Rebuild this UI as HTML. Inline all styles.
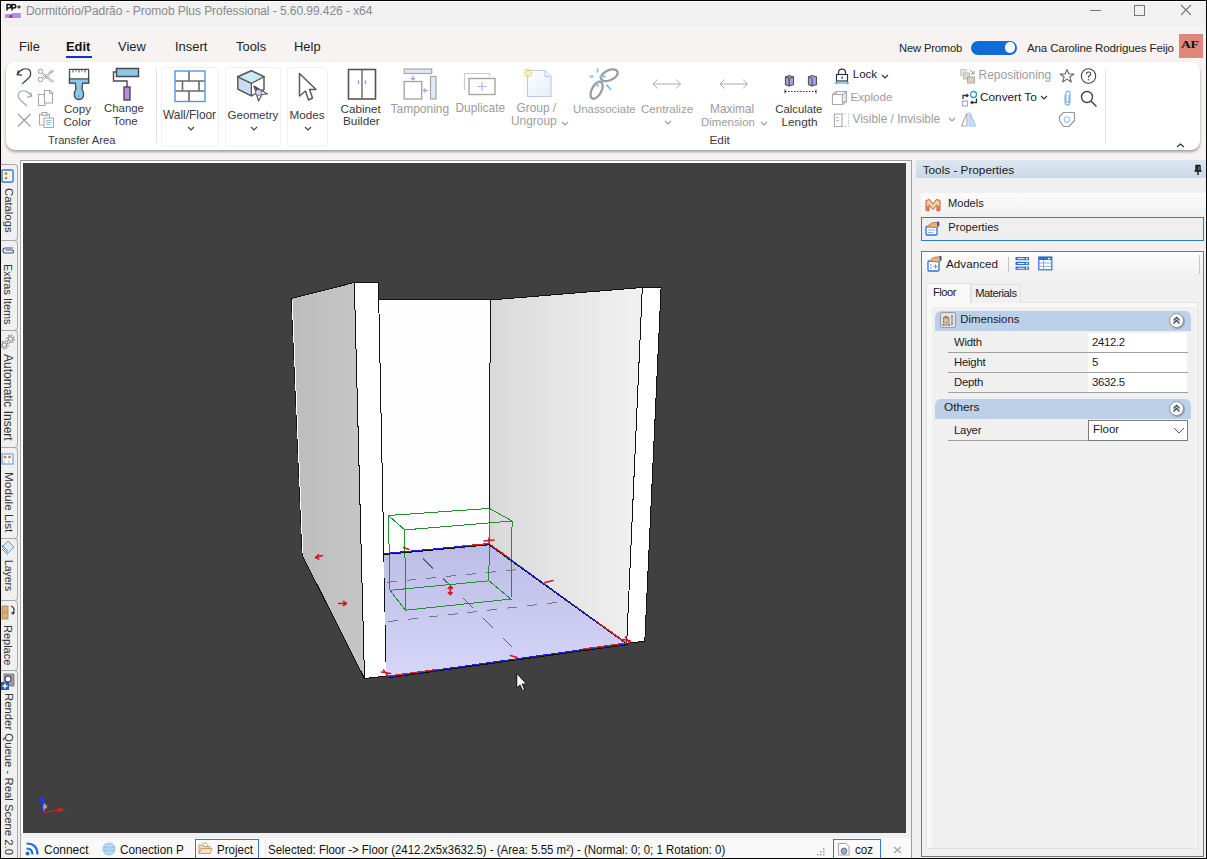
<!DOCTYPE html>
<html><head><meta charset="utf-8">
<style>
*{margin:0;padding:0;box-sizing:border-box}
html,body{width:1207px;height:859px;overflow:hidden;background:#000}
body{font-family:"Liberation Sans",sans-serif;color:#1a1a1a}
#root{position:absolute;left:0;top:0;width:1207px;height:859px;overflow:hidden;background:#f7f3f3}
.a{position:absolute}
.t{position:absolute;white-space:nowrap;line-height:1}
svg{position:absolute;overflow:visible}
</style></head><body><div id="root">
<!-- title bar -->
<div class="a" style="left:1px;top:1px;width:1205px;height:25px;background:#f1f1f1;border-top:1px solid #fff;border-left:1px solid #fff"></div>

<!-- app icon -->
<div class="a" style="left:5px;top:3px;width:17px;height:16px;background:#fff"></div>
<svg style="left:5px;top:3px" width="17" height="16"><path d="M2 7.5V1.5H4Q5.8 1.5 5.8 3.3Q5.8 5 4 5H2M7 7.5V1.5H9Q10.8 1.5 10.8 3.3Q10.8 5 9 5H7" stroke="#111" stroke-width="1.5" fill="none"/><path d="M12 4H16M14 2.3V5.7" stroke="#222" stroke-width="1.2"/><path d="M0 11H7V10H16V15H0Z" fill="#b98de6"/><path d="M4.5 14.5L6.5 12" stroke="#c00" stroke-width="1.4"/><rect x="5.5" y="12" width="2" height="3" fill="#667"/></svg>
<div class="t" style="left:26px;top:5px;font-size:12px;color:#8a8a8a;letter-spacing:-0.06px">Dormitório/Padrão - Promob Plus Professional - 5.60.99.426 - x64</div>
<!-- window controls -->
<div class="a" style="left:1090px;top:10px;width:11px;height:1px;background:#777"></div>
<div class="a" style="left:1134px;top:5px;width:11px;height:11px;border:1px solid #777"></div>
<svg style="left:1180px;top:4px" width="13" height="13"><path d="M1 1L11 11M11 1L1 11" stroke="#777" stroke-width="1.1"/></svg>
<!-- menu -->
<div class="t" style="left:19px;top:39.6px;font-size:13.6px;color:#222;transform:scaleX(0.95);transform-origin:0 0">File</div>
<div class="t" style="left:66px;top:39.6px;font-size:13.6px;font-weight:bold;color:#111;transform:scaleX(0.95);transform-origin:0 0">Edit</div>
<div class="a" style="left:66px;top:56px;width:26px;height:2px;background:#1b2ad8"></div>
<div class="t" style="left:118px;top:39.6px;font-size:13.6px;color:#222;transform:scaleX(0.95);transform-origin:0 0">View</div>
<div class="t" style="left:174.5px;top:39.6px;font-size:13.6px;color:#222;transform:scaleX(0.95);transform-origin:0 0">Insert</div>
<div class="t" style="left:236px;top:39.6px;font-size:13.6px;color:#222;transform:scaleX(0.95);transform-origin:0 0">Tools</div>
<div class="t" style="left:294px;top:39.6px;font-size:13.6px;color:#222;transform:scaleX(0.95);transform-origin:0 0">Help</div>
<div class="t" style="left:899px;top:43px;font-size:11.2px;color:#222;letter-spacing:-0.15px">New Promob</div>
<div class="a" style="left:970.5px;top:40.5px;width:46px;height:14px;border-radius:7px;background:#0f6cd6"></div>
<div class="a" style="left:1004.5px;top:42.3px;width:10.5px;height:10.5px;border-radius:6px;background:#fff"></div>
<div class="t" style="left:1027px;top:43px;font-size:11.5px;color:#222;letter-spacing:-0.12px">Ana Caroline Rodrigues Feijo</div>
<div class="a" style="left:1179px;top:34px;width:24px;height:24px;background:#e0877c"></div>
<div class="t" style="left:1181.3px;top:40.3px;font-size:10.5px;font-family:'Liberation Serif',serif;font-weight:bold;color:#111;transform:scaleX(1.3);transform-origin:0 0;letter-spacing:-0.3px">AF</div>
<!-- ribbon -->
<div class="a" style="left:6px;top:62px;width:1194px;height:88px;background:#fff;border-radius:9px;box-shadow:0 2px 3px rgba(0,0,0,0.35)"></div>

<!-- ===== LEFT TAB STRIP ===== -->
<div class="a" style="left:1px;top:160px;width:19px;height:698px;background:#f0f0f0"></div>

<div class="a" style="left:20px;top:160px;width:1px;height:698px;background:#a8a8a8"></div>
<!-- ===== VIEWPORT FRAME ===== -->
<div class="a" style="left:21px;top:160px;width:890px;height:678px;background:#f0f0f0"></div>
<div class="a" style="left:20px;top:160px;width:892px;height:1px;background:#a0a0a0"></div>
<div class="a" style="left:911px;top:160px;width:1px;height:698px;background:#a0a0a0"></div>
<div class="a" style="left:21px;top:161px;width:2px;height:672px;background:#fff"></div>
<div class="a" style="left:21px;top:161px;width:885px;height:2px;background:#fff"></div>
<div id="vp" class="a" style="left:23px;top:163px;width:883px;height:670px;background:#404040"></div>
<!-- ===== STATUS BAR ===== -->
<div class="a" style="left:21px;top:838px;width:889px;height:20px;background:#f9f9f9"></div>
<!-- ===== RIGHT PANEL ===== -->
<div class="a" style="left:912px;top:160px;width:294px;height:698px;background:#f0f0f0"></div>
<div class="a" style="left:916px;top:160px;width:290px;height:18px;background:linear-gradient(#dde7f1,#c9d7e5)"></div>
<div class="t" style="left:922.7px;top:163.8px;font-size:11.75px;color:#1a1a1a">Tools - Properties</div>
<svg style="left:1193px;top:164px" width="10" height="12"><path d="M2.5 1.5H7.5M3 1.5V7M7 1.5V7M1.5 7H8.5M5 7V11" stroke="#111" stroke-width="1.4" fill="none"/><rect x="3.5" y="1.5" width="2" height="5" fill="#111"/></svg>
<div class="a" style="left:921px;top:193px;width:285px;height:22px;background:linear-gradient(#fbfbfb,#f2f2f2)"></div>
<div class="t" style="left:948px;top:198.3px;font-size:11.1px;color:#1a1a1a">Models</div>
<div class="a" style="left:921px;top:217px;width:283px;height:24px;border:1px solid #2a7ad6;background:#efefef"></div>
<div class="t" style="left:948.3px;top:221.8px;font-size:11.1px;color:#1a1a1a">Properties</div>
<!-- Advanced frame -->
<div class="a" style="left:921px;top:251px;width:283px;height:606px;border:1px solid #777;background:#f0f0f0"></div>
<div class="a" style="left:922px;top:252px;width:281px;height:24px;background:linear-gradient(#fdfdfd,#f0f0f0)"></div>
<div class="a" style="left:1199px;top:255px;width:1px;height:19px;background:#c8c8c8"></div>
<div class="t" style="left:946px;top:257.5px;font-size:11.7px;color:#1a1a1a">Advanced</div>
<div class="a" style="left:1008px;top:257px;width:1px;height:15px;background:#c4c4c4"></div>
<!-- tabs -->
<div class="a" style="left:926px;top:302px;width:272px;height:547px;background:#f8f8f8;border:1px solid #e2e2e2"></div>
<div class="a" style="left:971px;top:284px;width:50px;height:19px;background:#f0f0f0;border:1px solid #e0e0e0;border-bottom:none"></div>
<div class="a" style="left:926px;top:283px;width:45px;height:21px;background:#f8f8f8;border:1px solid #e2e2e2;border-bottom:none"></div>
<div class="t" style="left:933px;top:286.5px;font-size:11.2px;color:#1a1a1a;letter-spacing:-0.5px">Floor</div>
<div class="t" style="left:975.2px;top:288px;font-size:11.2px;color:#1a1a1a;letter-spacing:-0.45px">Materials</div>
<div class="a" style="left:932px;top:307px;width:264px;height:541px;background:#f0f0f0"></div>

<!-- property grid -->
<div class="a" style="left:935px;top:311px;width:256px;height:20px;background:#bcd1e9;border-radius:6px 6px 0 0"></div>
<div class="a" style="left:940px;top:312px;width:16px;height:16px;background:#e4e4e4;border:1px solid #9a9a9a;border-radius:2px"></div>
<svg style="left:941px;top:313px" width="14" height="14"><path d="M2 5Q5 1.5 8 5" fill="#c78a5a" stroke="#8a6a50" stroke-width="0.8"/><rect x="2.5" y="5" width="5.5" height="5" fill="#d8c0a8" stroke="#8a7a6a" stroke-width="0.8"/><path d="M1.5 12H9M2 11V13M8.5 11V13M11 3V11M10 3H12M10 11H12" stroke="#666" stroke-width="0.9" fill="none"/></svg>
<div class="t" style="left:960.3px;top:313.8px;font-size:11.3px;color:#1a1a1a">Dimensions</div>
<div class="a" style="left:1169px;top:313px;width:15px;height:15px;border-radius:8px;background:#fff;border:1px solid #8e8e8e;box-shadow:1px 1px 1px rgba(0,0,0,0.25)"></div>
<svg style="left:1170px;top:314px" width="13" height="13"><path d="M3.5 6.5L6.5 3.5L9.5 6.5M3.5 9.5L6.5 6.5L9.5 9.5" stroke="#2b3f66" stroke-width="1.3" fill="none"/></svg>
<!-- rows -->
<div class="a" style="left:1088px;top:333px;width:99px;height:19px;background:#fff"></div>
<div class="a" style="left:1088px;top:353px;width:99px;height:19px;background:#fff"></div>
<div class="a" style="left:1088px;top:373px;width:99px;height:19px;background:#fff"></div>
<div class="a" style="left:948px;top:352px;width:240px;height:1px;background:#a0a0a0"></div>
<div class="a" style="left:948px;top:372px;width:240px;height:1px;background:#a0a0a0"></div>
<div class="a" style="left:948px;top:392px;width:240px;height:1px;background:#a0a0a0"></div>
<div class="t" style="left:954px;top:336.5px;font-size:11.3px;color:#1a1a1a;letter-spacing:-0.2px">Width</div>
<div class="t" style="left:954px;top:356.5px;font-size:11.3px;color:#1a1a1a;letter-spacing:-0.2px">Height</div>
<div class="t" style="left:954px;top:376.5px;font-size:11.3px;color:#1a1a1a;letter-spacing:-0.2px">Depth</div>
<div class="t" style="left:1092px;top:336.5px;font-size:11.3px;color:#1a1a1a;letter-spacing:-0.3px">2412.2</div>
<div class="t" style="left:1092px;top:356.5px;font-size:11.3px;color:#1a1a1a">5</div>
<div class="t" style="left:1092px;top:376.5px;font-size:11.3px;color:#1a1a1a;letter-spacing:-0.3px">3632.5</div>
<div class="a" style="left:935px;top:399px;width:256px;height:20px;background:#bcd1e9;border-radius:6px 6px 0 0"></div>
<div class="t" style="left:944px;top:402px;font-size:11.8px;color:#1a1a1a">Others</div>
<div class="a" style="left:1169px;top:401px;width:15px;height:15px;border-radius:8px;background:#fff;border:1px solid #8e8e8e;box-shadow:1px 1px 1px rgba(0,0,0,0.25)"></div>
<svg style="left:1170px;top:402px" width="13" height="13"><path d="M3.5 6.5L6.5 3.5L9.5 6.5M3.5 9.5L6.5 6.5L9.5 9.5" stroke="#2b3f66" stroke-width="1.3" fill="none"/></svg>
<div class="a" style="left:1088px;top:420px;width:100px;height:21px;background:#fff;border:1px solid #7a7a7a"></div>
<div class="a" style="left:948px;top:440px;width:140px;height:1px;background:#a0a0a0"></div>
<div class="t" style="left:954px;top:424.5px;font-size:11.3px;color:#1a1a1a;letter-spacing:-0.2px">Layer</div>
<div class="t" style="left:1093px;top:423.5px;font-size:11.5px;color:#1a1a1a">Floor</div>
<svg style="left:1173px;top:427px" width="12" height="7"><path d="M1 1L6 6L11 1" stroke="#555" stroke-width="1" fill="none"/></svg>

<!-- ===== RIBBON CONTENT ===== -->
<!-- transfer area small icons -->
<svg style="left:16px;top:68px" width="17" height="17"><path d="M1.8 6.2C4 1.5 9 -0.2 12.5 1.3C15.5 3 15.3 7.3 13 9.7L6.8 15.3" stroke="#3c3c3c" stroke-width="1.2" fill="none"/><path d="M6.8 15.3L5.8 16.2" stroke="#3b8fe0" stroke-width="1.5"/><path d="M6 7.2L1.2 6.6L2.4 2.4" stroke="#3c3c3c" stroke-width="1.3" fill="none"/></svg>
<svg style="left:37px;top:68px" width="17" height="16"><circle cx="3.5" cy="3.5" r="2.2" stroke="#9a9a9a" stroke-width="1" fill="none"/><circle cx="3.5" cy="11.5" r="2.2" stroke="#9a9a9a" stroke-width="1" fill="none"/><path d="M5.5 10L15.5 2.2L16.5 3.3L7 11.3M5.5 5L16.5 13.2L15.5 14.2L5.3 6.8" stroke="#a0a0a0" stroke-width="0.9" fill="none"/><path d="M12 5L15.5 2.6M8.5 8.8L9.5 9.6" stroke="#7fb4e6" stroke-width="1.1"/></svg>
<svg style="left:16px;top:89px" width="17" height="18"><path d="M15.2 7.2C13 2.5 8 0.8 4.5 2.3C1.5 4 1.7 8.3 4 10.7L10.2 16.3" stroke="#a8a8a8" stroke-width="1.2" fill="none"/><path d="M10.2 16.3L11.2 17.2" stroke="#8fc0ec" stroke-width="1.5"/><path d="M11 8.2L15.8 7.6L14.6 3.4" stroke="#a8a8a8" stroke-width="1.2" fill="none"/></svg>
<svg style="left:37px;top:89px" width="17" height="18"><path d="M1.5 5.5H6.5L8 7V16.5H1.5Z" stroke="#a8a8a8" stroke-width="1.1" fill="#fff"/><path d="M7.5 1.5H13L15.5 4V14H7.5Z" stroke="#a8a8a8" stroke-width="1.1" fill="#fff"/><path d="M12.5 2V4.5H15" stroke="#b6a6d8" stroke-width="1" fill="none"/></svg>
<svg style="left:16px;top:112px" width="16" height="16"><path d="M2 2L14.5 14.5M14.5 2L2 14.5" stroke="#9c9c9c" stroke-width="1.1"/></svg>
<svg style="left:38px;top:111px" width="17" height="18"><path d="M1.5 3.5H11.5V14H1.5Z" stroke="#a8a8a8" stroke-width="1.1" fill="#fff"/><rect x="4" y="1.5" width="5" height="3" stroke="#a8a8a8" stroke-width="1" fill="#eee"/><path d="M6 7H15.5V16.5H6Z" stroke="#a8a8a8" stroke-width="1.1" fill="#fff"/><path d="M8 9.5H13.5M8 11.5H13.5M8 13.5H12" stroke="#8fc0ec" stroke-width="1"/></svg>
<!-- copy color brush -->
<svg style="left:68px;top:68px" width="22" height="33"><path d="M1.5 1.3H20.6V15.2H1.5Z" stroke="#4a4a4a" stroke-width="1.3" fill="#fff"/><path d="M5 1.3V4.5M8 1.3V3.5M11 1.3V4.5M14 1.3V3.5M17 1.3V4.5" stroke="#4a4a4a" stroke-width="1"/><path d="M1.5 10.9H20.6V15.2H14.6L14 21.2Q15.6 24 15.6 26Q15.6 31.5 11 31.5Q6.3 31.5 6.3 26Q6.3 24 8 21.2L7.3 15.2H1.5Z" stroke="#4a4a4a" stroke-width="1.3" fill="#8ec5ec"/><path d="M10.2 28H11.8" stroke="#8a6aa0" stroke-width="0.9"/></svg>
<div class="t" style="left:64px;top:103px;font-size:11.6px;color:#3a3a3a;letter-spacing:0">Copy</div>
<div class="t" style="left:63.5px;top:115.5px;font-size:11.6px;color:#3a3a3a">Color</div>
<svg style="left:112px;top:67px" width="28" height="34"><rect x="4.5" y="1.5" width="22" height="8" stroke="#4a4a4a" stroke-width="1.5" fill="#8ec5ec"/><path d="M4.5 5H1.5V14H15V20" stroke="#4a4a4a" stroke-width="1.4" fill="none"/><rect x="12" y="20" width="6" height="13" stroke="#4a4a4a" stroke-width="1.4" fill="#b98ce0"/></svg>
<div class="t" style="left:104px;top:103px;font-size:11.4px;color:#3a3a3a">Change</div>
<div class="t" style="left:113px;top:115.5px;font-size:11.4px;color:#3a3a3a">Tone</div>
<div class="t" style="left:48px;top:134.5px;font-size:11.2px;color:#3a3a3a">Transfer Area</div>
<div class="a" style="left:156px;top:69px;width:1px;height:74px;background:#e2e2e2"></div>
<!-- wall/floor -->
<div class="a" style="left:161px;top:67px;width:58px;height:80px;border:1px solid #f1f1f1;border-radius:3px"></div>
<svg style="left:174px;top:70px" width="32" height="32"><rect x="1" y="1" width="30" height="30.5" stroke="#4f98e4" stroke-width="1.4" fill="#fff"/><path d="M1.5 11H30.5M1.5 21H30.5M15 1.5V11M8.5 11V21M25 11V21M15 21V31" stroke="#6a6a6a" stroke-width="1.6"/></svg>
<div class="t" style="left:163px;top:110px;font-size:11.9px;color:#3a3a3a">Wall/Floor</div>
<svg style="left:187px;top:126px" width="8" height="5"><path d="M1 1L4 4L7 1" stroke="#444" stroke-width="1.2" fill="none"/></svg>
<!-- geometry -->
<div class="a" style="left:225px;top:67px;width:56px;height:80px;border:1px solid #f1f1f1;border-radius:3px"></div>
<svg style="left:236px;top:70px" width="34" height="32"><path d="M15.4 0.8L28 6.8V19.5L15.4 25.8L1.9 19L1.9 6.8Z" stroke="#5a5a5a" stroke-width="1.5" fill="#fff" stroke-linejoin="round"/><path d="M1.9 6.8L15.4 13.3V25.8L1.9 19Z" fill="#c9dbf5" stroke="#5a5a5a" stroke-width="1.3"/><path d="M1.9 6.8L15.4 13.3L28 6.8L15.4 0.8Z" stroke="#5a5a5a" stroke-width="1.3" fill="#cdebf4"/><path d="M18 16L31.5 24L26 24.5L22.5 31Z" stroke="#555" stroke-width="1.2" fill="#fff" stroke-linejoin="round"/><path d="M18 16L21 22L23.5 19.5Z" fill="#444"/><circle cx="22.5" cy="22.5" r="3" fill="#c9dbf5" stroke="#666" stroke-width="0.9"/></svg>
<div class="t" style="left:227.5px;top:109px;font-size:11.6px;color:#3a3a3a">Geometry</div>
<svg style="left:250px;top:126px" width="8" height="5"><path d="M1 1L4 4L7 1" stroke="#444" stroke-width="1.2" fill="none"/></svg>
<!-- modes -->
<div class="a" style="left:287px;top:67px;width:41px;height:80px;border:1px solid #f1f1f1;border-radius:3px"></div>
<svg style="left:298px;top:72px" width="20" height="30"><path d="M1.5 1.5L18 17.5H11.5L14.5 26L10.5 28L7.5 19L1.5 24Z" stroke="#5a5a5a" stroke-width="1.5" fill="#fff" stroke-linejoin="round"/></svg>
<div class="t" style="left:289.5px;top:109px;font-size:11.7px;color:#3a3a3a">Modes</div>
<svg style="left:304px;top:126px" width="8" height="5"><path d="M1 1L4 4L7 1" stroke="#444" stroke-width="1.2" fill="none"/></svg>
<!-- cabinet builder -->
<svg style="left:347px;top:68px" width="30" height="32"><rect x="1.5" y="1.5" width="27" height="29.5" stroke="#555" stroke-width="1.6" fill="#fff"/><path d="M15 1.5V31" stroke="#666" stroke-width="1.4"/><path d="M11.5 12.5V16M18.5 12.5V16" stroke="#9b8ff0" stroke-width="1.4"/></svg>
<div class="t" style="left:340.5px;top:103px;font-size:11.7px;color:#3a3a3a">Cabinet</div>
<div class="t" style="left:343px;top:116px;font-size:11.8px;color:#3a3a3a">Builder</div>

<!-- tamponing -->
<svg style="left:403px;top:68px" width="35" height="33"><rect x="1.2" y="1" width="27.5" height="4.5" stroke="#a6a6a6" stroke-width="1.2" fill="#dfe9f7"/><rect x="1.2" y="13.5" width="17.5" height="17.5" stroke="#a6a6a6" stroke-width="1.4" fill="#fff"/><rect x="27.5" y="8.5" width="5.5" height="22.5" stroke="#a6a6a6" stroke-width="1.2" fill="#dfe9f7"/><path d="M10 7.5V12M8 10L10 12L12 10" stroke="#a99be6" stroke-width="1.1" fill="none"/><path d="M20.5 22.5H25.5M22.5 20.5L20.5 22.5L22.5 24.5" stroke="#a99be6" stroke-width="1.1" fill="none"/></svg>
<div class="t" style="left:390.5px;top:103px;font-size:12px;color:#9c9c9c">Tamponing</div>
<!-- duplicate -->
<svg style="left:463px;top:72px" width="35" height="24"><path d="M1.5 18V1.5H26.5V4.5" stroke="#cdc8ee" stroke-width="1.2" fill="none"/><rect x="6" y="6.5" width="26" height="16" stroke="#a6a6a6" stroke-width="1.4" fill="#fff"/><path d="M19 10V19M14.5 14.5H23.5" stroke="#b4a8ea" stroke-width="1.1"/></svg>
<div class="t" style="left:455.5px;top:103px;font-size:11.9px;color:#9c9c9c">Duplicate</div>
<!-- group -->
<svg style="left:522px;top:67px" width="31" height="31"><path d="M5.5 3.5H23L29 9.5V29.5H5.5Z" stroke="#b7cbe6" stroke-width="1.1" fill="url(#gpg)"/><path d="M23 3.5V9.5H29" stroke="#b7cbe6" stroke-width="1" fill="#eef4fb"/><defs><linearGradient id="gpg" x1="0" y1="0" x2="1" y2="1"><stop offset="0" stop-color="#fff"/><stop offset="1" stop-color="#e4eefa"/></linearGradient></defs><path d="M6 1V11M1 6H11M2.5 2.5L9.5 9.5M9.5 2.5L2.5 9.5" stroke="#e8cf73" stroke-width="1.2"/><circle cx="6" cy="6" r="2" fill="#fff3c0"/></svg>
<div class="t" style="left:516.5px;top:103px;font-size:11.9px;color:#9c9c9c">Group /</div>
<div class="t" style="left:511px;top:115.5px;font-size:11.9px;color:#9c9c9c">Ungroup</div>
<svg style="left:561px;top:121px" width="8" height="5"><path d="M1 1L4 4L7 1" stroke="#9c9c9c" stroke-width="1.1" fill="none"/></svg>
<!-- unassociate -->
<svg style="left:588px;top:67px" width="33" height="34"><ellipse cx="21.3" cy="8.3" rx="9" ry="5" transform="rotate(-25 21.3 8.3)" stroke="#9c9c9c" stroke-width="2.3" fill="none"/><ellipse cx="8.6" cy="23.2" rx="9.3" ry="4.8" transform="rotate(-62 8.6 23.2)" stroke="#9c9c9c" stroke-width="2.3" fill="none"/><path d="M9.5 1.4V5.4M9.5 14V20M1.6 9.5H5.6M11.4 9.5H17.8M18.4 17.6L23 22.8" stroke="#86c0ee" stroke-width="1.9"/></svg>
<div class="t" style="left:573px;top:104px;font-size:11.4px;color:#9c9c9c">Unassociate</div>
<!-- centralize -->
<svg style="left:652px;top:78px" width="30" height="12"><path d="M1 6H28.5M5.5 1.5L1 6L5.5 10.5M24 1.5L28.5 6L24 10.5" stroke="#a4a4a4" stroke-width="0.9" fill="none"/></svg>
<div class="t" style="left:641px;top:103px;font-size:11.6px;color:#9c9c9c">Centralize</div>
<svg style="left:664px;top:120px" width="8" height="5"><path d="M1 1L4 4L7 1" stroke="#9c9c9c" stroke-width="1.1" fill="none"/></svg>
<!-- maximal dimension -->
<svg style="left:719px;top:78px" width="30" height="12"><path d="M1 6H28.5M5.5 1.5L1 6L5.5 10.5M24 1.5L28.5 6L24 10.5" stroke="#a4a4a4" stroke-width="0.9" fill="none"/></svg>
<div class="t" style="left:710px;top:104px;font-size:11.9px;color:#9c9c9c">Maximal</div>
<div class="t" style="left:701px;top:116.5px;font-size:9.9px;color:#9c9c9c;font-size:11.4px">Dimension</div>
<svg style="left:760px;top:121px" width="8" height="5"><path d="M1 1L4 4L7 1" stroke="#9c9c9c" stroke-width="1.1" fill="none"/></svg>
<div class="t" style="left:709.5px;top:134.5px;font-size:11.8px;color:#3a3a3a">Edit</div>
<!-- calculate length -->
<svg style="left:783px;top:74px" width="36" height="20"><g stroke="#555" stroke-width="1.1"><path d="M2.5 3L6 1.5L10.5 3V10.5L6 12L2.5 10.5Z" fill="#a99be6"/><path d="M2.5 3L6 4.5L10.5 3" fill="none"/><path d="M6 4.5V12" /><path d="M2.5 3V10.5L6 12V4.5Z" fill="#8fb0e6"/><path d="M25.5 3L29 1.5L33.5 3V10.5L29 12L25.5 10.5Z" fill="#a99be6"/><path d="M25.5 3V10.5L29 12V4.5Z" fill="#8fb0e6"/></g><path d="M2 17.5H33" stroke="#333" stroke-width="1.1" stroke-dasharray="1.5 1.5"/><path d="M2 15.5V19.5M33 15.5V19.5" stroke="#333" stroke-width="1"/></svg>
<div class="t" style="left:775.3px;top:104px;font-size:11.3px;color:#3a3a3a">Calculate</div>
<div class="t" style="left:781.5px;top:116.5px;font-size:11.8px;color:#3a3a3a">Length</div>
<!-- lock / explode / visible -->
<svg style="left:834px;top:68px" width="16" height="17"><path d="M4.5 6.5V4.5Q4.5 1.2 8 1.2Q11.5 1.2 11.5 4.5V6.5" stroke="#333" stroke-width="1.2" fill="none"/><rect x="2.5" y="6.5" width="11" height="6.5" stroke="#333" stroke-width="1.2" fill="#fff"/><rect x="7" y="8.5" width="2" height="2.5" fill="#4a9be6"/><path d="M1.5 15H14.5M3 13.8L1.5 15L3 16.2M13 13.8L14.5 15L13 16.2" stroke="#3d8fe0" stroke-width="1" fill="none"/></svg>
<div class="t" style="left:852.8px;top:69px;font-size:11.5px;color:#222">Lock</div>
<svg style="left:880.5px;top:74px" width="8" height="5"><path d="M1 1L4 4L7 1" stroke="#333" stroke-width="1.2" fill="none"/></svg>
<svg style="left:831px;top:90px" width="18" height="16"><path d="M5.5 1.5H15.5V11.5H5.5Z" stroke="#aaa" stroke-width="1.1" fill="#fff"/><path d="M1.5 4.5H11.5V14.5H1.5Z" stroke="#aaa" stroke-width="1.2" fill="#fff"/><path d="M1.5 4.5L5.5 1.5M11.5 4.5L15.5 1.5M11.5 14.5L15.5 11.5" stroke="#aaa" stroke-width="1.1"/><path d="M14 3V10" stroke="#b8d4f0" stroke-width="1.2"/></svg>
<div class="t" style="left:850.5px;top:91px;font-size:11.6px;color:#9c9c9c">Explode</div>
<svg style="left:833px;top:112px" width="17" height="16"><path d="M1.5 2H9V14.5H1.5Z" stroke="#aaa" stroke-width="1.1" fill="#fff"/><path d="M9 2H15.5V14.5H9" stroke="#9dc3ec" stroke-width="1" stroke-dasharray="1.5 1.5" fill="none"/><path d="M3.5 5.5H5.5M3.5 8.5H5.5" stroke="#999" stroke-width="1.1"/></svg>
<div class="t" style="left:852.5px;top:113.5px;font-size:11.9px;color:#9c9c9c">Visible / Invisible</div>
<svg style="left:948px;top:117px" width="8" height="5"><path d="M1 1L4 4L7 1" stroke="#9c9c9c" stroke-width="1.1" fill="none"/></svg>
<!-- repositioning / convert / mirror -->
<svg style="left:959px;top:68px" width="18" height="16"><rect x="1.5" y="1.5" width="6" height="6" fill="#e4e4e4" stroke="#ccc"/><rect x="4.5" y="5" width="6" height="6" fill="#e0d8c8" stroke="#bbb"/><rect x="8.5" y="9" width="7" height="6" fill="#d8cfbc" stroke="#aaa"/><path d="M11 2L15 6M15 3V6H12" stroke="#999" stroke-width="1" fill="none"/></svg>
<div class="t" style="left:978.5px;top:69px;font-size:12px;color:#9c9c9c">Repositioning</div>
<svg style="left:961px;top:90px" width="18" height="17"><path d="M2 9V5.5H7M5.5 4L7 5.5L5.5 7" stroke="#333" stroke-width="1.3" fill="none"/><circle cx="12.5" cy="4.5" r="3" stroke="#3a8fe0" stroke-width="1.3" fill="none"/><rect x="1.5" y="11" width="5" height="5" stroke="#a99be6" stroke-width="1.1" fill="none"/><path d="M15.5 8.5V12.5H10M11.5 11L10 12.5L11.5 14" stroke="#333" stroke-width="1.3" fill="none"/></svg>
<div class="t" style="left:980px;top:92px;font-size:11.8px;color:#222">Convert To</div>
<svg style="left:1040px;top:95px" width="8" height="5"><path d="M1 1L4 4L7 1" stroke="#333" stroke-width="1.2" fill="none"/></svg>
<svg style="left:960px;top:111px" width="17" height="17"><path d="M7 2V15H1.5Z" stroke="#aaa" stroke-width="1.1" fill="#fff"/><path d="M10 2V15H15.5Z" stroke="#9dc3ec" stroke-width="1.1" fill="#cfe3f6"/><path d="M8.5 1V16" stroke="#9dc3ec" stroke-width="0.8" stroke-dasharray="1.5 1"/></svg>
<!-- star/help/clip/search/tag -->
<svg style="left:1059px;top:68px" width="17" height="16"><path d="M8 1.5L9.9 6H14.8L10.9 9L12.3 14L8 11.1L3.7 14L5.1 9L1.2 6H6.1Z" stroke="#666" stroke-width="1.1" fill="none" stroke-linejoin="round"/></svg>
<svg style="left:1080px;top:68px" width="17" height="16"><circle cx="8.5" cy="8" r="7.2" stroke="#444" stroke-width="1.1" fill="none"/><path d="M6.3 6.2Q6.3 4 8.5 4Q10.7 4 10.7 6Q10.7 7.5 8.5 8.5V9.8" stroke="#444" stroke-width="1.1" fill="none"/><circle cx="8.5" cy="11.8" r="0.8" fill="#444"/></svg>
<svg style="left:1062px;top:90px" width="11" height="16"><path d="M3 5V12Q3 15 5.5 15Q8 15 8 12V3.5Q8 1.2 6 1.2Q4 1.2 4 3.5V11Q4 12.5 5.5 12.5Q7 12.5 7 11V5" stroke="#8fb6e6" stroke-width="1.3" fill="none"/></svg>
<svg style="left:1080px;top:90px" width="18" height="17"><circle cx="7" cy="7" r="5.5" stroke="#444" stroke-width="1.4" fill="none"/><path d="M11 11L16.5 16.5" stroke="#444" stroke-width="1.5"/></svg>
<svg style="left:1058px;top:111px" width="18" height="17"><path d="M5.5 1.5H16.5V9.5L11 15.5H5.5L1.5 9.5V5.5Z" stroke="#999" stroke-width="1.2" fill="none" stroke-linejoin="round"/><circle cx="9" cy="8.5" r="2.8" stroke="#9dc3ec" stroke-width="1.1" fill="none"/></svg>
<div class="a" style="left:1105px;top:70px;width:1px;height:74px;background:#e2e2e2"></div>
<svg style="left:1176px;top:143px" width="9" height="5"><path d="M1 4L4.5 1L8 4" stroke="#333" stroke-width="1.2" fill="none"/></svg>

<!-- ===== LEFT TABS ===== -->
<div class="a" style="left:0px;top:164px;width:18px;height:77px;border:1px solid #a9a9a9;border-left:none;border-radius:0 4px 4px 0;background:#f0f0f0"></div>
<div class="t" style="left:13.5px;top:188px;font-size:11.3px;color:#333;transform:rotate(90deg);transform-origin:0 0">Catalogs</div>
<div class="a" style="left:0px;top:240px;width:18px;height:91px;border:1px solid #a9a9a9;border-left:none;border-radius:0 4px 4px 0;background:#f0f0f0"></div>
<div class="t" style="left:13.4px;top:263.5px;font-size:10.9px;color:#333;transform:rotate(90deg);transform-origin:0 0">Extras Items</div>
<div class="a" style="left:0px;top:330px;width:18px;height:118px;border:1px solid #a9a9a9;border-left:none;border-radius:0 4px 4px 0;background:#f0f0f0"></div>
<div class="t" style="left:13.6px;top:354px;font-size:12.0px;color:#333;transform:rotate(90deg);transform-origin:0 0">Automatic Insert</div>
<div class="a" style="left:0px;top:447px;width:18px;height:92px;border:1px solid #a9a9a9;border-left:none;border-radius:0 4px 4px 0;background:#f0f0f0"></div>
<div class="t" style="left:13.5px;top:472px;font-size:11.8px;color:#333;transform:rotate(90deg);transform-origin:0 0">Module List</div>
<div class="a" style="left:0px;top:538px;width:18px;height:63px;border:1px solid #a9a9a9;border-left:none;border-radius:0 4px 4px 0;background:#f0f0f0"></div>
<div class="t" style="left:13.4px;top:559.5px;font-size:10.4px;color:#333;transform:rotate(90deg);transform-origin:0 0">Layers</div>
<div class="a" style="left:0px;top:600px;width:18px;height:71px;border:1px solid #a9a9a9;border-left:none;border-radius:0 4px 4px 0;background:#f0f0f0"></div>
<div class="t" style="left:13.4px;top:625px;font-size:11.0px;color:#333;transform:rotate(90deg);transform-origin:0 0">Replace</div>
<div class="a" style="left:0px;top:670px;width:18px;height:195px;border:1px solid #a9a9a9;border-left:none;border-radius:0 4px 4px 0;background:#f0f0f0"></div>
<div class="t" style="left:13.5px;top:693px;font-size:11.35px;color:#333;transform:rotate(90deg);transform-origin:0 0">Render Queue - Real Scene 2.0</div>

<!-- tab icons -->
<svg style="left:1px;top:169px" width="13" height="14"><rect x="1" y="1" width="11" height="12" rx="1" stroke="#2e7ad6" stroke-width="1.4" fill="#fff"/><circle cx="5" cy="4.5" r="1.6" fill="#d08a50"/><circle cx="5" cy="9" r="1.6" fill="#d08a50"/><path d="M9 3V11" stroke="#a8c8ee" stroke-dasharray="1 1"/></svg>
<svg style="left:2px;top:246px" width="12" height="9"><path d="M11 2H3Q1 2 1 4.5Q1 7 3 7H10Q11.5 7 11.5 5.5Q11.5 4 10 4H3.5" stroke="#3a5590" stroke-width="1.1" fill="none"/></svg>
<svg style="left:0px;top:333px" width="16" height="18"><g fill="none" stroke="#8a8a8a"><circle cx="10.5" cy="6" r="3.6" stroke-width="1.6" stroke-dasharray="1.4 1.4"/><circle cx="10.5" cy="6" r="2.2" stroke-width="1"/><circle cx="4.4" cy="12" r="3.6" stroke-width="1.6" stroke-dasharray="1.4 1.4"/><circle cx="4.4" cy="12" r="2.2" stroke-width="1"/></g></svg>
<svg style="left:1px;top:453px" width="13" height="12"><rect x="1" y="1" width="11" height="10" stroke="#6a9ad6" stroke-width="1.1" fill="#fff"/><circle cx="4" cy="4" r="1.5" fill="#c08060"/><circle cx="8.5" cy="4" r="1.5" fill="#c08060"/><path d="M3 7.5V10M8 7.5V10" stroke="#8ab0e0"/></svg>
<svg style="left:1px;top:540px" width="14" height="15"><path d="M1 7L7 1L13 7L7 13Z" stroke="#6a9ad6" stroke-width="1" fill="#dbe8f7"/><path d="M1 9L7 15M1 5L7 11" stroke="#6a9ad6" stroke-width="1" fill="none"/></svg>
<svg style="left:1px;top:604px" width="16" height="16"><rect x="1" y="2" width="6" height="6" fill="#e0b070" stroke="#b08040" stroke-width="0.8"/><rect x="1" y="9" width="6" height="6" fill="#e0b070" stroke="#b08040" stroke-width="0.8"/><path d="M10 2Q15 4 12 10M10.5 8.5L12 10L13.5 8" stroke="#222" stroke-width="1.1" fill="none"/></svg>
<svg style="left:1px;top:673px" width="14" height="17"><rect x="3" y="1" width="10" height="12" fill="#999" stroke="#777" stroke-width="0.8"/><circle cx="7" cy="6" r="3" fill="#fff" stroke="#335" stroke-width="1"/><rect x="0" y="9" width="8" height="8" fill="#2d5fa8"/><path d="M4 10.5V15.5M1.5 13H6.5" stroke="#fff" stroke-width="1.4"/></svg>
<!-- ===== STATUS BAR CONTENT ===== -->
<svg style="left:25px;top:842px" width="15" height="14"><circle cx="2.5" cy="11.5" r="2" fill="#1e6fd8"/><path d="M1.5 6.5Q7.5 6.5 7.5 12.5" stroke="#1e6fd8" stroke-width="2.2" fill="none"/><path d="M1.5 1.5Q12.5 1.5 12.5 12.5" stroke="#1e6fd8" stroke-width="2.2" fill="none"/></svg>
<div class="t" style="left:44.3px;top:843.8px;font-size:12.4px;color:#111;transform:scaleX(0.965);transform-origin:0 0">Connect</div>
<svg style="left:102px;top:842px" width="14" height="14"><circle cx="7" cy="7" r="6.5" fill="#8fc3ef"/><path d="M0.5 7H13.5M7 0.5V13.5M2 3.5H12M2 10.5H12" stroke="#cfe6fa" stroke-width="0.8"/><ellipse cx="7" cy="7" rx="3" ry="6.5" stroke="#cfe6fa" stroke-width="0.8" fill="none"/></svg>
<div class="t" style="left:120.3px;top:843.8px;font-size:12.4px;color:#111;transform:scaleX(0.945);transform-origin:0 0">Conection P</div>
<div class="a" style="left:195px;top:839px;width:64px;height:20px;border:1px solid #2f7bd8;border-bottom:none;background:#f9f9f9"></div>
<svg style="left:198px;top:842px" width="15" height="13"><path d="M1 3H5L6 4.5H12V11.5H1Z" fill="#f3d9a8" stroke="#c49a60" stroke-width="0.9"/><path d="M4 2L8 0.8L10 4" stroke="#999" stroke-width="0.8" fill="#fff"/><path d="M1 11.5L3 6.5H14L12 11.5Z" fill="#f8e6c0" stroke="#c49a60" stroke-width="0.9"/></svg>
<div class="t" style="left:216.5px;top:843.8px;font-size:12.4px;color:#111;transform:scaleX(0.935);transform-origin:0 0">Project</div>
<div class="a" style="left:265px;top:840px;width:1px;height:18px;background:#e6e6e6"></div>
<div class="t" style="left:268.3px;top:844px;font-size:12.4px;color:#111;transform:scaleX(0.924);transform-origin:0 0">Selected: Floor -&gt; Floor (2412.2x5x3632.5) - (Area: 5.55 m²) - (Normal: 0; 0; 1 Rotation: 0)</div>
<svg style="left:814px;top:847px" width="12" height="10"><g fill="#999"><rect x="9" y="1" width="1.5" height="1.5"/><rect x="6" y="4" width="1.5" height="1.5"/><rect x="9" y="4" width="1.5" height="1.5"/><rect x="3" y="7" width="1.5" height="1.5"/><rect x="6" y="7" width="1.5" height="1.5"/><rect x="9" y="7" width="1.5" height="1.5"/></g></svg>
<div class="a" style="left:833px;top:839px;width:48px;height:20px;border:1px solid #2f7bd8;border-bottom:none;background:#f9f9f9"></div>
<svg style="left:837px;top:842px" width="14" height="14"><path d="M1.5 1.5H9L12 4.5V13H1.5Z" fill="#fff" stroke="#999" stroke-width="0.9"/><circle cx="7" cy="9" r="3" fill="#9ab" stroke="#567" stroke-width="0.8"/></svg>
<div class="t" style="left:854.7px;top:843.8px;font-size:12.4px;color:#111;transform:scaleX(0.93);transform-origin:0 0">coz</div>
<svg style="left:893px;top:846px" width="9" height="8"><path d="M1 1L8 7M8 1L1 7" stroke="#aaa" stroke-width="1.6"/></svg>

<!-- ===== 3D SCENE ===== -->
<svg style="left:23px;top:163px" width="883" height="670" viewBox="23 163 883 670" shape-rendering="crispEdges">
<defs>
<linearGradient id="rw" x1="490" y1="0" x2="642" y2="0" gradientUnits="userSpaceOnUse"><stop offset="0" stop-color="#d9d9d9"/><stop offset="0.5" stop-color="#e6e6e6"/><stop offset="1" stop-color="#f1f1f1"/></linearGradient>
<linearGradient id="lw" x1="291" y1="0" x2="360" y2="0" gradientUnits="userSpaceOnUse"><stop offset="0" stop-color="#bdbdbd"/><stop offset="1" stop-color="#c6c6c6"/></linearGradient>
<linearGradient id="fl" x1="0" y1="545" x2="0" y2="677" gradientUnits="userSpaceOnUse"><stop offset="0" stop-color="#bcbce6"/><stop offset="1" stop-color="#d6d6fa"/></linearGradient>
</defs>
<!-- left wall outer face -->
<polygon points="291.4,298.5 354.3,282.5 364.5,678.5 302.3,555.5" fill="url(#lw)" stroke="#111" stroke-width="1"/>
<path d="M292.2,300 L302.8,553" stroke="#fff" stroke-width="1"/>
<!-- back wall -->
<polygon points="378.4,299.6 490,300 489,543.8 384,553.6" fill="#fefefe"/>
<path d="M378.4,299.6 L490,300" stroke="#111" stroke-width="1"/>
<!-- right wall inner face -->
<polygon points="490.3,300 642.3,287.5 626.7,643.4 488.9,543.8" fill="url(#rw)"/>
<path d="M490.3,300 L642.3,287.5" stroke="#111" stroke-width="1"/>
<path d="M490.3,300 L489.2,543.8" stroke="#111" stroke-width="1"/>
<!-- right wall front strip -->
<polygon points="642.3,287.5 661.1,287.5 644.8,641.1 626.7,643.4" fill="#fff" stroke="#111" stroke-width="1"/>
<!-- left wall front strip -->
<polygon points="354.3,282.5 378.4,282.5 386.3,676 364.5,678.5" fill="#fff" stroke="#111" stroke-width="1"/>
<!-- floor -->
<polygon points="384,553.6 488.9,543.8 626.7,643.4 386.6,677" fill="url(#fl)"/>
<g stroke="#76767e" stroke-width="1" fill="none">
<path d="M386.6,582.3 L516.1,569.7" stroke-dasharray="10 10"/>
<path d="M388,621.6 L559.2,602.2" stroke-dasharray="10 10"/>
<path d="M423.2,558.6 L512.8,647.8" stroke="#5e5e6c" stroke-dasharray="14 14"/>
</g>
<!-- green box -->
<g stroke="#21902e" stroke-width="1" fill="none">
<path d="M388.4,515.5 L489.5,508.4 L512.1,521 L404.8,529.9 Z"/>
<path d="M390,590.3 L488.9,580.8 L511,599.1 L405.4,610.2 Z"/>
<path d="M388.4,515.5 L390,590.3 M489.5,508.4 L488.9,580.8 M512.1,521 L511,599.1 M404.8,529.9 L405.4,610.2"/>
</g>
<!-- floor edges -->
<g stroke="#111" stroke-width="1" fill="none">
<path d="M384,554.6 L488.9,544.8 M488.9,544.8 L627.5,644.6 L386.6,678"/>
</g>
<g stroke="#1e22e6" stroke-width="1.1" fill="none">
<path d="M384,553.6 L488.9,543.8 L626.7,643.4 L386.6,677"/>
</g>
<g stroke="#d8202a" stroke-width="1.2" fill="none">
<path d="M462,546 L488.9,543.6 L510,558.5"/>
<path d="M596,621 L626.5,643 L583,649"/>
<path d="M387,676.2 L439,669.2"/>
</g>
<!-- red markers -->
<g stroke="#cc1a22" stroke-width="1.6" fill="none" stroke-linecap="round" shape-rendering="auto">
<path d="M315.5,557.5 L322.5,555.5 M315.5,557.5 L318.5,554.8 M315.5,557.5 L318.8,559"/>
<path d="M338.5,603.5 L346.5,603.5 M346.5,603.5 L343.5,601.5 M346.5,603.5 L343.5,605.5"/>
<path d="M403.5,547.5 L409,549.5"/>
<path d="M484,541 L494,540 M489,538 V543"/>
<path d="M545,582.5 L553,580.5"/>
<path d="M450.3,586.5 V594.5 M448.3,588.5 L450.3,586.5 L452.3,588.5 M448.3,592.5 L450.3,594.5 L452.3,592.5"/>
<path d="M510.5,655.5 L517,657.5 M515.5,659.5 L517,657.5"/>
<path d="M623.5,639.5 L630.5,641 M625.5,637 L629.5,643"/>
<path d="M381.5,672 L390.5,673.5 M383.5,670 L387.5,675.5"/>
</g>
<!-- axis -->
<g shape-rendering="auto">
<path d="M42.8,812.5 L42.2,803" stroke="#2030f0" stroke-width="1.3"/>
<path d="M41.2,795.8 L38.6,801.2 L40.8,801.2 L41.2,805.5 L43.2,805.5 L43,801.2 L45.4,801.2 Z" fill="#2038f0"/>
<path d="M43.6,810.5 L45,806" stroke="#aaa" stroke-width="1.3"/>
<path d="M44.2,802.5 L42.8,808 L44.5,807.5 L46,809 L47.8,805 L46.5,806 Z" fill="#a8a8a8"/>
<path d="M43.5,812.5 L58,810.3" stroke="#e02020" stroke-width="1.1"/>
<path d="M57,807.5 L65.5,809.2 L57,812.5 L58.5,810 Z" fill="#e02020"/>
</g>
<!-- cursor -->
<path d="M516.8,673.5 L516.8,688 L520,684.8 L522.5,690.5 L524.5,689.5 L522.2,684 L526.5,684 Z" fill="#fff" stroke="#111" stroke-width="0.9" stroke-linejoin="round"/>
</svg>

<!-- right panel icons -->
<svg style="left:925px;top:198px" width="16" height="14"><path d="M1 12.5V2.5L4.5 1.5L8 6L11.5 1.5L15 2.5V12.5L12 13V7L8 11.5L4 7V13Z" fill="#f2cf9a" stroke="#c45a3a" stroke-width="1"/><path d="M1.5 8V12.5L4 13V8.5M12 8.5V13L14.5 12.5V8" fill="#e07050"/></svg>
<svg style="left:925px;top:221px" width="16" height="15"><rect x="1" y="5.5" width="11" height="8.5" rx="1" fill="#fff" stroke="#2e72d2" stroke-width="1.3"/><path d="M3 9H10M3 11.5H8" stroke="#8ab4e8" stroke-width="1"/><path d="M2.5 6Q5 1.5 10 1.5L14 1V5L12 6.5Z" fill="#e4b478" stroke="#a07040" stroke-width="0.8"/><path d="M13 1V5" stroke="#2a4a8a" stroke-width="1.6"/></svg>
<svg style="left:927px;top:255px" width="16" height="17"><rect x="1" y="6" width="11" height="10" rx="1" fill="#fff" stroke="#2e72d2" stroke-width="1.3"/><path d="M3 10H5M3 13H5M6.5 11.5H10.5M8.5 9.5V13.5" stroke="#5a9ae0" stroke-width="1.1"/><path d="M2.5 6.5Q5 2 10 2L14 1.5V5.5L12 7Z" fill="#e4b478" stroke="#a07040" stroke-width="0.8"/><path d="M13.5 1V5.5" stroke="#2a4a8a" stroke-width="1.6"/></svg>
<svg style="left:1015px;top:256px" width="15" height="15"><g fill="#2e6fd0"><rect x="0.5" y="1" width="13.5" height="3.2"/><rect x="0.5" y="5.8" width="13.5" height="3.2"/><rect x="0.5" y="10.6" width="13.5" height="3.2"/></g><g fill="#fff"><rect x="2.5" y="2.2" width="7" height="0.9"/><rect x="2.5" y="7" width="7" height="0.9"/><rect x="2.5" y="11.8" width="7" height="0.9"/><rect x="11" y="1.8" width="1.6" height="1.6"/><rect x="11" y="6.6" width="1.6" height="1.6"/><rect x="11" y="11.4" width="1.6" height="1.6"/></g></svg>
<svg style="left:1038px;top:256px" width="15" height="15"><rect x="0.8" y="1" width="13" height="12.8" fill="#fff" stroke="#2e6fd0" stroke-width="1.2"/><rect x="0.8" y="1" width="13" height="3" fill="#2e6fd0"/><path d="M1 7H14M1 10.3H14M5.5 4V13.8" stroke="#7aa6e0" stroke-width="0.9"/><rect x="10" y="2" width="2" height="1.2" fill="#fff"/></svg>
<!-- window borders -->
<div class="a" style="left:0;top:0;width:1207px;height:1px;background:#000"></div>
<div class="a" style="left:0;top:0;width:1px;height:859px;background:#000"></div>
<div class="a" style="left:1206px;top:0;width:1px;height:859px;background:#000"></div>
<div class="a" style="left:0;top:858px;width:1207px;height:1px;background:#000"></div>
</div></body></html>
